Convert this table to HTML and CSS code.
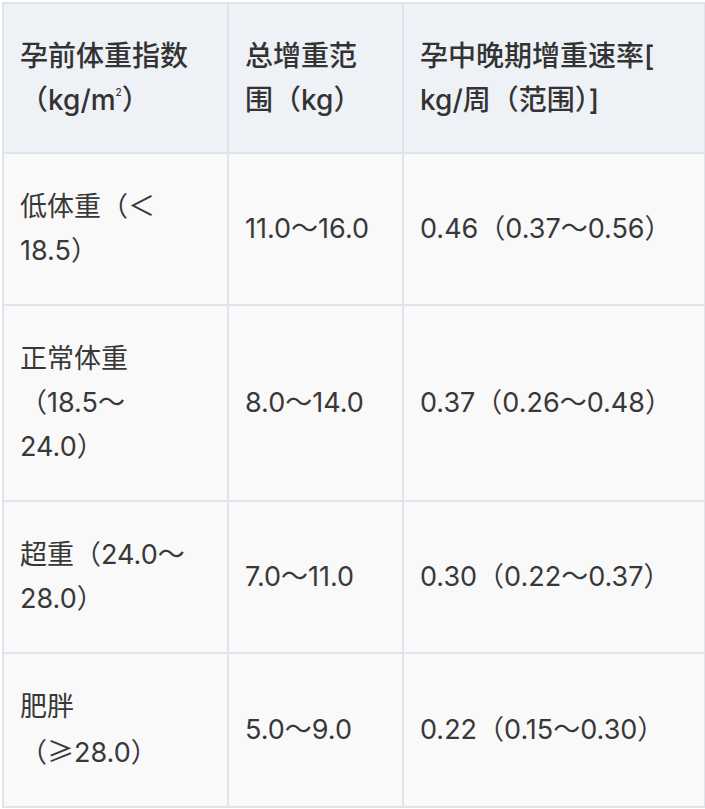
FILE: index.html
```html
<!DOCTYPE html>
<html lang="zh-CN">
<head>
<meta charset="utf-8">
<link rel="stylesheet" href="styles.css">
</head>
<body>
<table class="gain">
  <colgroup>
    <col class="c1">
    <col class="c2">
    <col class="c3">
  </colgroup>
  <thead>
    <tr>
      <th>孕前体重指数<br>（kg/m<sup>2</sup>）</th>
      <th>总增重范<br>围（kg）</th>
      <th>孕中晚期增重速率[<br>kg/周（范围）]</th>
    </tr>
  </thead>
  <tbody>
    <tr class="r1">
      <td>低体重（＜<br>18.5）</td>
      <td>11.0～16.0</td>
      <td>0.46（0.37～0.56）</td>
    </tr>
    <tr class="r2">
      <td>正常体重<br>（18.5～<br>24.0）</td>
      <td>8.0～14.0</td>
      <td>0.37（0.26～0.48）</td>
    </tr>
    <tr class="r3">
      <td>超重（24.0～<br>28.0）</td>
      <td>7.0～11.0</td>
      <td>0.30（0.22～0.37）</td>
    </tr>
    <tr class="r4">
      <td>肥胖<br>（<span class="sym">≥</span>28.0）</td>
      <td>5.0～9.0</td>
      <td>0.22（0.15～0.30）</td>
    </tr>
  </tbody>
</table>
</body>
</html>
```
FILE: styles.css
```css
html, body {
  margin: 0;
  background: #ffffff;
}
body {
  padding: 2px 1px 0 2px;
  font-family: Inter, "Noto Sans CJK SC", sans-serif;
  color: #383838;
}
.gain {
  border-collapse: collapse;
  table-layout: fixed;
  width: 702px;
  font-size: 27px;
  line-height: 44px;
}
.c1 { width: 225px; }
.c2 { width: 175px; }
.c3 { width: 302px; }
.gain th,
.gain td {
  border: 2px solid #dfe4ec;
  padding: 31px 16px;
  text-align: left;
  vertical-align: middle;
  white-space: nowrap;
}
.gain th {
  background: #eef1f6;
  font-size: 28px;
  font-weight: 500;
  color: #333333;
  padding-top: 30px;
  padding-bottom: 30px;
}
.gain td {
  background: #f9f9f9;
  font-weight: 400;
}
.gain .sym {
  font-family: "Noto Sans CJK SC", sans-serif;
}
.gain sup {
  font-size: 10px;
  line-height: 0;
  vertical-align: 14px;
}
```
